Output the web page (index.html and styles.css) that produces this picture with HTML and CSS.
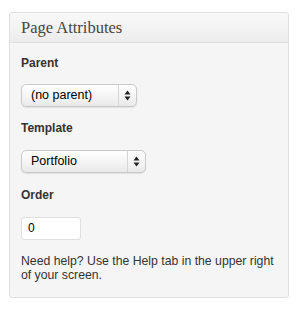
FILE: index.html
```html
<!DOCTYPE html>
<html>
<head>
<meta charset="utf-8">
<link rel="stylesheet" href="styles.css">
</head>
<body>
<div class="postbox">
  <h3 class="hndle">Page Attributes</h3>
  <div class="inside">
    <p class="label">Parent</p>
    <div class="select select-parent">
      <span class="select-text">(no parent)</span>
      <span class="select-arrows">
        <svg width="7" height="11" viewBox="0 0 7 11"><path d="M3.5 0.5 L6.5 4.5 L0.5 4.5 Z M3.5 10.5 L6.5 6.5 L0.5 6.5 Z" fill="#222"/></svg>
      </span>
    </div>
    <p class="label">Template</p>
    <div class="select select-template">
      <span class="select-text">Portfolio</span>
      <span class="select-arrows">
        <svg width="7" height="11" viewBox="0 0 7 11"><path d="M3.5 0.5 L6.5 4.5 L0.5 4.5 Z M3.5 10.5 L6.5 6.5 L0.5 6.5 Z" fill="#222"/></svg>
      </span>
    </div>
    <p class="label">Order</p>
    <div class="text-input">0</div>
    <p class="help">Need help? Use the Help tab in the upper right<br>of your screen.</p>
  </div>
</div>
</body>
</html>
```

FILE: styles.css
```css
html, body {
  margin: 0;
  padding: 0;
  background: #fff;
}
body {
  padding: 12px 10px 0 9px;
  font-family: "Liberation Sans", Arial, sans-serif;
  color: #333;
}
.postbox {
  width: 278px;
  border: 1px solid #dfdfdf;
  border-radius: 3px;
  background: #f5f5f5;
  box-shadow: 0 1px 0 #fff inset;
}
.hndle {
  margin: 0;
  height: 29px;
  line-height: 29px;
  padding: 0 11px;
  font-family: "Liberation Serif", Georgia, serif;
  font-weight: normal;
  font-size: 16.5px;
  color: #464646;
  background: linear-gradient(#f9f9f9, #ececec);
  border-bottom: 1px solid #dfdfdf;
  border-radius: 3px 3px 0 0;
}
.inside {
  padding: 13px 11px 15px;
}
.label {
  margin: 0 0 14px;
  font-size: 12px;
  line-height: 14px;
  font-weight: bold;
}
.select {
  display: flex;
  align-items: stretch;
  height: 21px;
  border: 1px solid #c9c9c9;
  border-radius: 5px;
  background: linear-gradient(#ffffff, #f3f3f3 60%, #e9e9e9);
  box-shadow: 0 1px 1px rgba(0,0,0,0.08);
  margin-bottom: 14px;
  box-sizing: content-box;
}
.select-parent { width: 114px; }
.select-template { width: 123px; }
.select + .label { margin-bottom: 15px; }
.select-template { margin-bottom: 15px; }
.select-text {
  flex: 1;
  padding-left: 9px;
  font-size: 12.5px;
  line-height: 21px;
  color: #000;
}
.select-arrows {
  width: 17px;
  border-left: 1px solid #d6d6d6;
  display: flex;
  align-items: center;
  justify-content: center;
}
.text-input {
  height: 21px;
  border: 1px solid #dfdfdf;
  border-radius: 3px;
  background: #fff;
  font-size: 12px;
  line-height: 21px;
  padding: 0 0 0 6px;
  box-sizing: content-box;
  width: 52px;
  color: #000;
}
.help {
  margin: 14px 0 0;
  font-size: 12.25px;
  line-height: 14px;
  white-space: nowrap;
}
```
